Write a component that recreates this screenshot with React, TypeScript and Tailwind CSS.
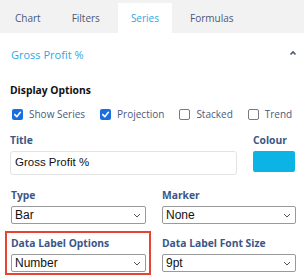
import React from "react";

const Check = ({ checked }: { checked: boolean }) =>
  checked ? (
    <span className="flex h-[11px] w-[11px] items-center justify-center rounded-[2px] bg-[#1a6fe0]">
      <svg width="9" height="9" viewBox="0 0 10 10">
        <path d="M2 5.2 L4.2 7.4 L8.2 2.6" fill="none" stroke="white" strokeWidth="1.8" strokeLinecap="round" strokeLinejoin="round" />
      </svg>
    </span>
  ) : (
    <span className="h-[11px] w-[11px] rounded-[2px] border border-[#7a7a7a] bg-white" />
  );

const Chevron = () => (
  <svg width="8" height="5" viewBox="0 0 8 5" className="shrink-0">
    <path d="M1 1 L4 4 L7 1" fill="none" stroke="#555" strokeWidth="1" />
  </svg>
);

const Select = ({ value }: { value: string }) => (
  <div className="flex h-[18px] items-center justify-between rounded-[2px] border border-[#9a9a9a] bg-white pl-[3px] pr-[4px] font-['Liberation_Sans',Arial,sans-serif] text-[12px] text-[#111]">
    <span>{value}</span>
    <Chevron />
  </div>
);

const Label = ({ children }: { children: React.ReactNode }) => (
  <div className="text-[10.3px] font-bold leading-[14px] text-[#3a5687]">{children}</div>
);

export default function App() {
  const tabs = ["Chart", "Filters", "Series", "Formulas"];
  const boxes: [string, boolean][] = [
    ["Show Series", true],
    ["Projection", true],
    ["Stacked", false],
    ["Trend", false],
  ];
  return (
    <div className="h-[276px] w-[304px] overflow-hidden bg-white font-['Open_Sans',sans-serif]">
      <div className="flex h-[33px] items-end gap-[5px] bg-[#f2f2f2] pl-[2px]">
        {tabs.map((t) => (
          <div
            key={t}
            className={
              t === "Series"
                ? "flex h-[30px] items-center bg-white px-[13px] text-[10px] text-[#2aa9e6]"
                : "flex h-[30px] items-center px-[13px] text-[10px] text-[#4b5878]"
            }
          >
            {t}
          </div>
        ))}
      </div>
      <div className="flex h-[44px] items-center justify-between pl-[11px] pr-[7px]">
        <span className="text-[11px] text-[#2aa9e6]">Gross Profit %</span>
        <svg width="8" height="6" viewBox="0 0 8 6" className="-mt-[5px]">
          <path d="M1.5 4.5 L4 2 L6.5 4.5" fill="none" stroke="#4b5878" strokeWidth="1.6" />
        </svg>
      </div>
      <div className="mt-[6px] pl-[10px] pr-[8px]">
        <div className="text-[10.3px] font-bold leading-[14px] text-[#111]">Display Options</div>
        <div className="mt-[10px] flex items-center gap-[15px] pl-[2px]">
          {boxes.map(([l, c]) => (
            <div key={l} className="flex items-center gap-[6px]">
              <Check checked={c} />
              <span className="text-[10px] text-[#4b5a7c]">{l}</span>
            </div>
          ))}
        </div>
        <div className="mt-[11px] flex gap-[16px]">
          <div className="flex w-[227px] flex-col">
            <Label>Title</Label>
            <div className="mt-[4px] flex h-[24px] items-center rounded-[3px] border border-[#e3e3e3] pl-[4px] font-['Liberation_Sans',Arial,sans-serif] text-[11.5px] text-[#111]">
              Gross Profit %
            </div>
          </div>
          <div className="flex flex-col">
            <Label>Colour</Label>
            <div className="mt-[4px] h-[21px] w-[42px] rounded-[2px] bg-[#0cb4e6]" />
          </div>
        </div>
        <div className="mt-[13px] grid grid-cols-[135px_134px] gap-x-[16px] pl-[1px]">
          <div className="flex flex-col gap-[4px]">
            <Label>Type</Label>
            <Select value="Bar" />
          </div>
          <div className="flex flex-col gap-[4px]">
            <Label>Marker</Label>
            <Select value="None" />
          </div>
          <div className="relative mt-[12px] flex flex-col gap-[4px]">
            <div className="pointer-events-none absolute -bottom-[3px] -left-[6px] -right-[5px] -top-[5px] border-2 border-[#ea4130]" />
            <Label>Data Label Options</Label>
            <Select value="Number" />
          </div>
          <div className="mt-[12px] flex flex-col gap-[4px]">
            <Label>Data Label Font Size</Label>
            <Select value="9pt" />
          </div>
        </div>
      </div>
    </div>
  );
}
